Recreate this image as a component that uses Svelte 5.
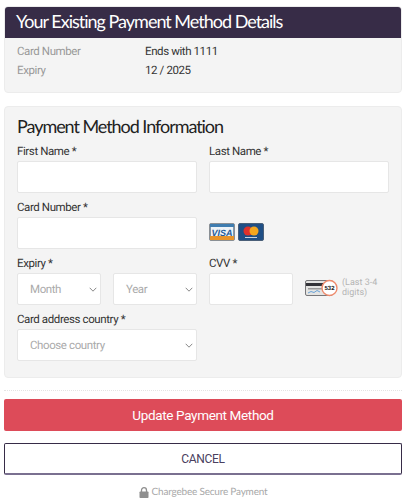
<script>
  const existing = [
    { label: 'Card Number', value: 'Ends with 1111' },
    { label: 'Expiry', value: '12 / 2025' }
  ];
</script>

<main class="page">
  <section class="details">
    <h2>Your Existing Payment Method Details</h2>
    <dl>
      {#each existing as row}
        <div class="detail-row">
          <dt>{row.label}</dt>
          <dd>{row.value}</dd>
        </div>
      {/each}
    </dl>
  </section>

  <form class="panel">
    <h3>Payment Method Information</h3>

    <div class="row">
      <label class="field">
        <span>First Name *</span>
        <input type="text" />
      </label>
      <label class="field">
        <span>Last Name *</span>
        <input type="text" />
      </label>
    </div>

    <div class="row">
      <label class="field">
        <span>Card Number *</span>
        <input type="text" />
      </label>
      <div class="cards">
        <svg width="26" height="18" viewBox="0 0 26 18">
          <rect x="0.5" y="0.5" width="25" height="17" rx="1.5" fill="#7f98b0" stroke="#8a8f94" />
          <rect x="1" y="1" width="24" height="3" fill="#3f7db0" />
          <rect x="2" y="4" width="22" height="9" fill="#eef3f7" />
          <rect x="1" y="13" width="24" height="4" fill="#e8942a" />
          <text x="13" y="12.5" class="visa">VISA</text>
        </svg>
        <svg width="26" height="18" viewBox="0 0 26 18">
          <rect x="0.5" y="0.5" width="25" height="17" rx="1.5" fill="#1f4f86" stroke="#4a5f78" />
          <circle cx="10" cy="8" r="4.5" fill="#e0312b" />
          <circle cx="16" cy="8" r="4.5" fill="#f4a71f" />
          <rect x="7" y="14" width="12" height="1" fill="#c9d6e4" />
        </svg>
      </div>
    </div>

    <div class="row">
      <div class="field">
        <span>Expiry *</span>
        <div class="expiry">
          <div class="select">Month{@render chevron()}</div>
          <div class="select">Year{@render chevron()}</div>
        </div>
      </div>
      <div class="cvv">
        <label class="field cvv-field">
          <span>CVV *</span>
          <input type="text" />
        </label>
        <div class="cvv-hint">
          <svg width="33" height="18" viewBox="0 0 33 18">
            <rect x="0.5" y="1.5" width="27" height="15" rx="1.5" fill="#e4e4e2" stroke="#77777a" />
            <rect x="1" y="4" width="26" height="3" fill="#333338" />
            <rect x="3" y="9" width="15" height="1.5" fill="#9a9a9a" />
            <path d="M3 14l3-1.5 3 1 3-2 3 1.5" fill="none" stroke="#6aa3d8" />
            <circle cx="24.5" cy="9" r="7.5" fill="#fff" stroke="#ee8a6c" stroke-width="1.4" />
            <text x="24.5" y="11" class="code">532</text>
          </svg>
          <small>(Last 3-4 digits)</small>
        </div>
      </div>
    </div>

    <div class="row">
      <div class="field">
        <span>Card address country *</span>
        <div class="select">Choose country{@render chevron()}</div>
      </div>
    </div>
  </form>

  <hr />

  <button type="button" class="primary">Update Payment Method</button>
  <button type="button" class="cancel">CANCEL</button>

  <p class="secure">
    <svg width="10" height="11" viewBox="0 0 10 11">
      <path d="M2.5 5V3.2a2.5 2.5 0 0 1 5 0V5" fill="none" stroke="#8f8f8f" stroke-width="1.3" />
      <rect x="0.5" y="4.5" width="9" height="6.5" rx="0.8" fill="#8f8f8f" />
    </svg>
    Chargebee Secure Payment
  </p>
</main>

{#snippet chevron()}
  <svg class="chevron" width="8" height="5" viewBox="0 0 8 5">
    <path d="M0.7 0.8L4 4.2l3.3-3.4" fill="none" stroke="#888" stroke-width="1" />
  </svg>
{/snippet}

<style>
  :global(body) {
    margin: 0;
    background: #fff;
    font-family: Roboto, "Liberation Sans", sans-serif;
    text-rendering: geometricPrecision;
  }

  .page {
    padding: 6px 3px 0 4px;
    height: 498px;
    overflow: hidden;
    color: #333;
    font-size: 11.5px;
    letter-spacing: -0.4px;
  }

  .details {
    background: #f4f4f4;
    border: 1px solid #ececec;
    border-radius: 4px;
    overflow: hidden;
    height: 87px;
    box-sizing: border-box;
  }

  h2 {
    margin: -1px -1px 0;
    background: #372c47;
    color: #fff;
    font: 400 18px/30px Lato, sans-serif;
    letter-spacing: -1px;
    padding-left: 12px;
    height: 32px;
  }

  dl {
    margin: 4px 0 0;
    padding-left: 12px;
  }

  .detail-row {
    display: flex;
    height: 19px;
    line-height: 19px;
  }

  dt {
    width: 128px;
    color: #999;
  }

  dd {
    margin: 0;
    color: #333;
  }

  .panel {
    margin-top: 13px;
    height: 272px;
    box-sizing: border-box;
    background: #f4f4f4;
    border: 1px solid #ececec;
    border-radius: 4px;
    padding: 0 12px;
  }

  h3 {
    margin: 0;
    padding-top: 8px;
    font: 400 18px/22px Lato, sans-serif;
    letter-spacing: -1.05px;
    color: #222;
    height: 27px;
  }

  .row {
    display: grid;
    grid-template-columns: 180px 180px;
    gap: 12px;
    margin-bottom: 5px;
  }

  .field {
    display: flex;
    flex-direction: column;
    min-width: 0;
  }

  .field > span {
    line-height: 18px;
    margin-bottom: 1px;
    color: #333;
  }

  input,
  .select {
    box-sizing: border-box;
    height: 32px;
    width: 100%;
    margin: 0;
    background: #fff;
    border: 1px solid #e6e6e6;
    border-radius: 2px;
  }

  .select {
    display: flex;
    align-items: center;
    justify-content: space-between;
    padding: 0 3px 0 12px;
    color: #aaa;
  }

  .expiry {
    display: grid;
    grid-template-columns: 84px 84px;
    gap: 12px;
  }

  .cards {
    display: flex;
    gap: 3px;
    align-items: flex-end;
    padding-bottom: 8px;
  }

  .visa {
    font: italic 700 9px "Liberation Sans", sans-serif;
    letter-spacing: 0;
    fill: #1f5c99;
    text-anchor: middle;
  }

  .code {
    font: 700 6px "Liberation Sans", sans-serif;
    letter-spacing: 0;
    fill: #222;
    text-anchor: middle;
  }

  .cvv {
    display: flex;
    gap: 12px;
  }

  .cvv-field {
    width: 84px;
    flex: none;
  }

  .cvv-hint {
    display: flex;
    align-items: center;
    gap: 4px;
    margin-top: 18px;
    height: 32px;
  }

  .cvv-hint svg {
    flex: none;
  }

  small {
    font-size: 9px;
    line-height: 10px;
    letter-spacing: 0;
    color: #b4b4b4;
  }

  hr {
    border: 0;
    border-top: 1px dotted #e4e4e4;
    margin: 12px 0 8px;
  }

  button {
    display: block;
    box-sizing: border-box;
    width: 100%;
    border-radius: 2px;
    font-family: inherit;
    padding: 0;
  }

  .primary {
    height: 32px;
    border: 0;
    background: #dd4b59;
    color: #fff;
    font-size: 13.5px;
    letter-spacing: -0.35px;
  }

  .cancel {
    margin-top: 12px;
    height: 32px;
    background: #fff;
    border: 1px solid #372c47;
    border-bottom: 2px solid #7a7090;
    color: #4a4060;
    font-size: 12px;
    letter-spacing: -0.3px;
  }

  .secure {
    margin: 10px 0 0;
    display: flex;
    justify-content: center;
    align-items: center;
    gap: 3px;
    font: 400 10px/14px Lato, sans-serif;
    letter-spacing: -0.2px;
    color: #a8a8a8;
  }
</style>
